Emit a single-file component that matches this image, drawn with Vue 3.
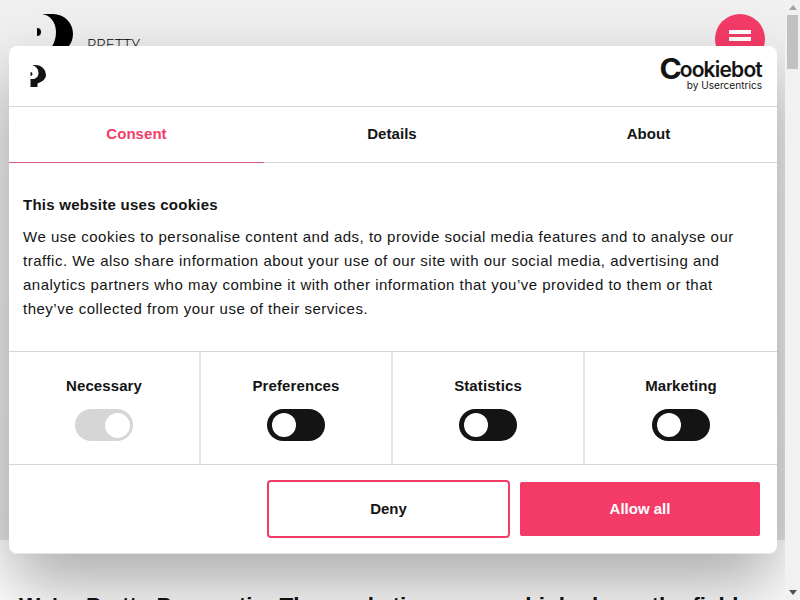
<script setup>
const tabs = [
  { label: 'Consent', active: true },
  { label: 'Details', active: false },
  { label: 'About', active: false }
]

const toggles = [
  { label: 'Necessary', locked: true },
  { label: 'Preferences', locked: false },
  { label: 'Statistics', locked: false },
  { label: 'Marketing', locked: false }
]
</script>

<template>
  <div class="page">
    <main class="main">
      <header class="hero">
        <div class="topbar">
          <a class="brand">
            <svg class="brand-mark" viewBox="0 0 40 44" width="40" height="44">
              <path d="M5 2 H16 A20 20 0 0 1 16 42 H8 C15 37 19 29 19 20 C19 10 13 3 5 2 Z" fill="#000" />
              <path d="M0 16 A4 4 0 0 1 4 20 A4 4 0 0 1 0 24 Z" fill="#000" />
            </svg>
            <span class="brand-name">PRETTY</span>
          </a>
          <button class="burger"><span></span><span></span></button>
        </div>
      </header>

      <section class="intro">
        <h1>We're Pretty Pragmatic: The marketing agency high above the field</h1>
      </section>

      <div class="dialog">
        <div class="dialog-head">
          <svg class="dialog-logo" viewBox="0 0 18 24" width="18" height="24">
            <path d="M2 1 H6 A10 10 0 0 1 16 11 C16 15 12 18 7.5 19.5 V23 H0.5 V15 H4 C7 14 8.5 12 8.5 9 C8.5 5 6 2 2 1 Z" fill="#141414" />
            <path d="M0.5 8 A2 2 0 0 1 2.5 10 A2 2 0 0 1 0.5 12 Z" fill="#141414" />
          </svg>
          <div class="cookiebot">
            <div class="cookiebot-name"><span class="big-c">C</span>ookiebot</div>
            <div class="cookiebot-by">by Usercentrics</div>
          </div>
        </div>

        <nav class="tabs">
          <div v-for="tab in tabs" :key="tab.label" class="tab" :class="{ active: tab.active }">
            {{ tab.label }}
          </div>
        </nav>

        <div class="body">
          <h2>This website uses cookies</h2>
          <p>We use cookies to personalise content and ads, to provide social media features and to analyse our traffic. We also share information about your use of our site with our social media, advertising and analytics partners who may combine it with other information that you’ve provided to them or that they’ve collected from your use of their services.</p>
        </div>

        <div class="toggles">
          <div v-for="item in toggles" :key="item.label" class="toggle-cell">
            <strong>{{ item.label }}</strong>
            <span class="switch" :class="{ locked: item.locked }"><i></i></span>
          </div>
        </div>

        <div class="actions">
          <button class="btn deny">Deny</button>
          <button class="btn allow">Allow all</button>
        </div>
      </div>
    </main>

    <aside class="scrollbar">
      <span class="arrow up"></span>
      <span class="thumb"></span>
      <span class="arrow down"></span>
    </aside>
  </div>
</template>

<style>
html {
  overflow: hidden;
}
body {
  background: #fff;
}
</style>

<style scoped>
.page {
  display: flex;
  height: 600px;
  overflow: hidden;
  font-family: "Liberation Sans", Arial, sans-serif;
  color: #141414;
}

.main {
  position: relative;
  flex: 1;
  min-width: 0;
  overflow: hidden;
}

.scrollbar {
  flex: none;
  width: 15px;
  display: flex;
  flex-direction: column;
  align-items: center;
  background: #f1f1f1;
}

.arrow {
  flex: none;
  width: 0;
  height: 0;
  border-left: 4px solid transparent;
  border-right: 4px solid transparent;
}

.arrow.up {
  margin-top: 5px;
  border-bottom: 5px solid #a3a3a3;
}

.arrow.down {
  margin-top: auto;
  margin-bottom: 5px;
  border-top: 5px solid #505050;
}

.thumb {
  flex: none;
  width: 11px;
  height: 54px;
  margin-top: 5px;
  background: #c1c1c1;
}

.hero {
  height: 540px;
  background: linear-gradient(#f0f0f0, #e6e6e6);
}

.topbar {
  display: flex;
  justify-content: space-between;
  padding: 14px 20px 0 37px;
}

.brand {
  display: flex;
  align-items: flex-start;
}

.brand-mark {
  display: block;
  margin-top: -2px;
}

.brand-name {
  margin: 21px 0 0 10px;
  font-family: "Open Sans", sans-serif;
  font-weight: 300;
  font-size: 16px;
  line-height: 20px;
  color: #000;
}

.burger {
  display: flex;
  flex-direction: column;
  align-items: center;
  justify-content: center;
  gap: 3px;
  width: 50px;
  height: 50px;
  padding: 0 0 7px;
  border: 0;
  border-radius: 50%;
  background: #f43b67;
}

.burger span {
  width: 22px;
  height: 4px;
  background: #fff;
}

.intro {
  padding: 50px 19px 0;
}

.intro h1 {
  margin: 0;
  font-size: 22.4px;
  line-height: 32px;
  white-space: nowrap;
  word-spacing: 1px;
  color: #111;
}

.dialog {
  position: absolute;
  top: 46px;
  left: 9px;
  width: 768px;
  height: 508px;
  display: flex;
  flex-direction: column;
  background: #fff;
  border-radius: 8px;
  box-shadow: 0 32px 68px rgba(0, 0, 0, 0.33), inset 0 -1px 0 #e6e6e6;
}

.dialog-head {
  display: flex;
  justify-content: space-between;
  align-items: flex-start;
  flex: none;
  height: 61px;
  padding: 12px 15px 0 21px;
  box-sizing: border-box;
  border-bottom: 1px solid #d6d6d6;
}

.dialog-logo {
  display: block;
  margin-top: 6px;
}

.cookiebot {
  text-align: right;
  color: #141414;
}

.cookiebot-name {
  font-family: Inter, sans-serif;
  font-weight: 600;
  font-size: 21px;
  line-height: 22px;
  letter-spacing: -0.8px;
}

.big-c {
  display: inline-block;
  font-size: 28px;
  font-weight: 700;
  line-height: 22px;
  letter-spacing: -2px;
  vertical-align: -2px;
  transform: scaleX(1.08);
  transform-origin: right center;
}

.cookiebot-by {
  font-family: Inter, sans-serif;
  font-size: 10.1px;
  line-height: 11px;
  margin-top: -1px;
}

.tabs {
  display: grid;
  grid-template-columns: 255px 256px 257px;
  flex: none;
  height: 56px;
  box-sizing: border-box;
  border-bottom: 1px solid #d6d6d6;
}

.tab {
  display: flex;
  align-items: center;
  justify-content: center;
  padding-bottom: 2px;
  font-weight: 700;
  font-size: 15px;
  letter-spacing: 0.05px;
  margin-bottom: -1px;
  border-bottom: 1px solid transparent;
}

.tab.active {
  color: #f43b67;
  border-bottom-color: #d85a76;
}

.body {
  flex: none;
  height: 188px;
  padding: 33px 14px 0;
  box-sizing: border-box;
}

.body h2 {
  margin: 0 0 11px;
  font-size: 15px;
  line-height: 18px;
  font-weight: 700;
  letter-spacing: 0.26px;
}

.body p {
  margin: 0;
  font-size: 15px;
  line-height: 24px;
  letter-spacing: 0.5px;
}

.toggles {
  display: grid;
  grid-template-columns: repeat(4, 1fr);
  flex: none;
  height: 114px;
  box-sizing: border-box;
  border-top: 1px solid #d6d6d6;
  border-bottom: 1px solid #d6d6d6;
}

.toggle-cell {
  display: flex;
  flex-direction: column;
  align-items: center;
  padding-top: 24px;
  box-sizing: border-box;
  border-right: 2px solid #e6e6e6;
}

.toggle-cell:last-child {
  border-right: 0;
}

.toggle-cell strong {
  font-size: 15px;
  line-height: 20px;
  letter-spacing: 0.1px;
}

.switch {
  display: block;
  position: relative;
  width: 58px;
  height: 32px;
  margin-top: 13px;
  border-radius: 16px;
  background: #141414;
}

.switch i {
  position: absolute;
  top: 4px;
  left: 5px;
  width: 24px;
  height: 24px;
  border-radius: 50%;
  background: #fff;
}

.switch.locked {
  background: #d6d6d6;
}

.switch.locked i {
  left: 30px;
  width: 25px;
  height: 25px;
}

.actions {
  flex: 1;
  display: flex;
  justify-content: flex-end;
  align-items: flex-start;
  gap: 10px;
  padding: 16px 17px 0 0;
}

.btn {
  height: 54px;
  padding: 0 0 2px;
  font-family: "Liberation Sans", Arial, sans-serif;
  font-weight: 700;
  font-size: 15px;
  border-radius: 2px;
}

.deny {
  width: 243px;
  height: 58px;
  margin-top: -1px;
  color: #141414;
  background: #fff;
  border: 2px solid #f43b67;
  border-radius: 4px;
}

.allow {
  width: 240px;
  margin-top: 1px;
  color: #fff;
  background: #f43b67;
  border: 0;
}
</style>
